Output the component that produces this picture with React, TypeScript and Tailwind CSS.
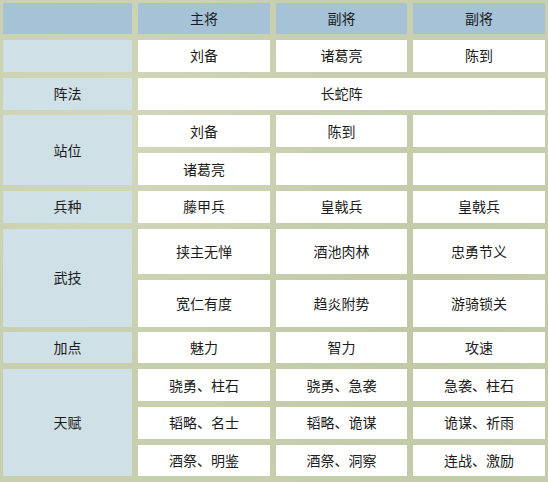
const font = { fontFamily: '"Noto Sans CJK SC", "Noto Sans", sans-serif' }

const head = 'flex items-center justify-center bg-[#a5c2d7] text-[14px] text-[#1c1c1c]'
const label = 'flex items-center justify-center bg-[#cfe0e7] text-[14px] text-[#1c1c1c]'
const cell = 'flex items-center justify-center bg-white text-[14px] text-[#1c1c1c]'

function Cell({ text = '', className = cell }: { text?: string; className?: string }) {
  return <div className={className}>{text}</div>
}

export default function App() {
  return (
    <div
      className="w-[548px] h-[482px] bg-[#c8cfae] bg-[radial-gradient(circle_at_20%_30%,#d2d8ba_0,transparent_40%),radial-gradient(circle_at_80%_70%,#bfc7a4_0,transparent_45%)]"
      style={font}
    >
      <div className="grid grid-cols-[129px_132px_131px_132px] grid-rows-[31px_32px_32px_32px_32px_32px_45px_47px_31px_32px_32px_31px] gap-x-[6px] gap-y-[5.8px] p-[3px]">
        {/* header */}
        <Cell className={head} />
        <Cell className={head} text="主将" />
        <Cell className={head} text="副将" />
        <Cell className={head} text="副将" />

        <Cell className={label} />
        <Cell text="刘备" />
        <Cell text="诸葛亮" />
        <Cell text="陈到" />

        <Cell className={label} text="阵法" />
        <div className={cell + ' col-span-3'}>长蛇阵</div>

        <div className={label + ' row-span-2'}>站位</div>
        <Cell text="刘备" />
        <Cell text="陈到" />
        <Cell />
        <Cell text="诸葛亮" />
        <Cell />
        <Cell />

        <Cell className={label} text="兵种" />
        <Cell text="藤甲兵" />
        <Cell text="皇戟兵" />
        <Cell text="皇戟兵" />

        <div className={label + ' row-span-2'}>武技</div>
        <Cell text="挟主无惮" />
        <Cell text="酒池肉林" />
        <Cell text="忠勇节义" />
        <Cell text="宽仁有度" />
        <Cell text="趋炎附势" />
        <Cell text="游骑锁关" />

        <Cell className={label} text="加点" />
        <Cell text="魅力" />
        <Cell text="智力" />
        <Cell text="攻速" />

        <div className={label + ' row-span-3'}>天赋</div>
        <Cell text="骁勇、柱石" />
        <Cell text="骁勇、急袭" />
        <Cell text="急袭、柱石" />
        <Cell text="韬略、名士" />
        <Cell text="韬略、诡谋" />
        <Cell text="诡谋、祈雨" />
        <Cell text="酒祭、明鉴" />
        <Cell text="酒祭、洞察" />
        <Cell text="连战、激励" />
      </div>
    </div>
  )
}
